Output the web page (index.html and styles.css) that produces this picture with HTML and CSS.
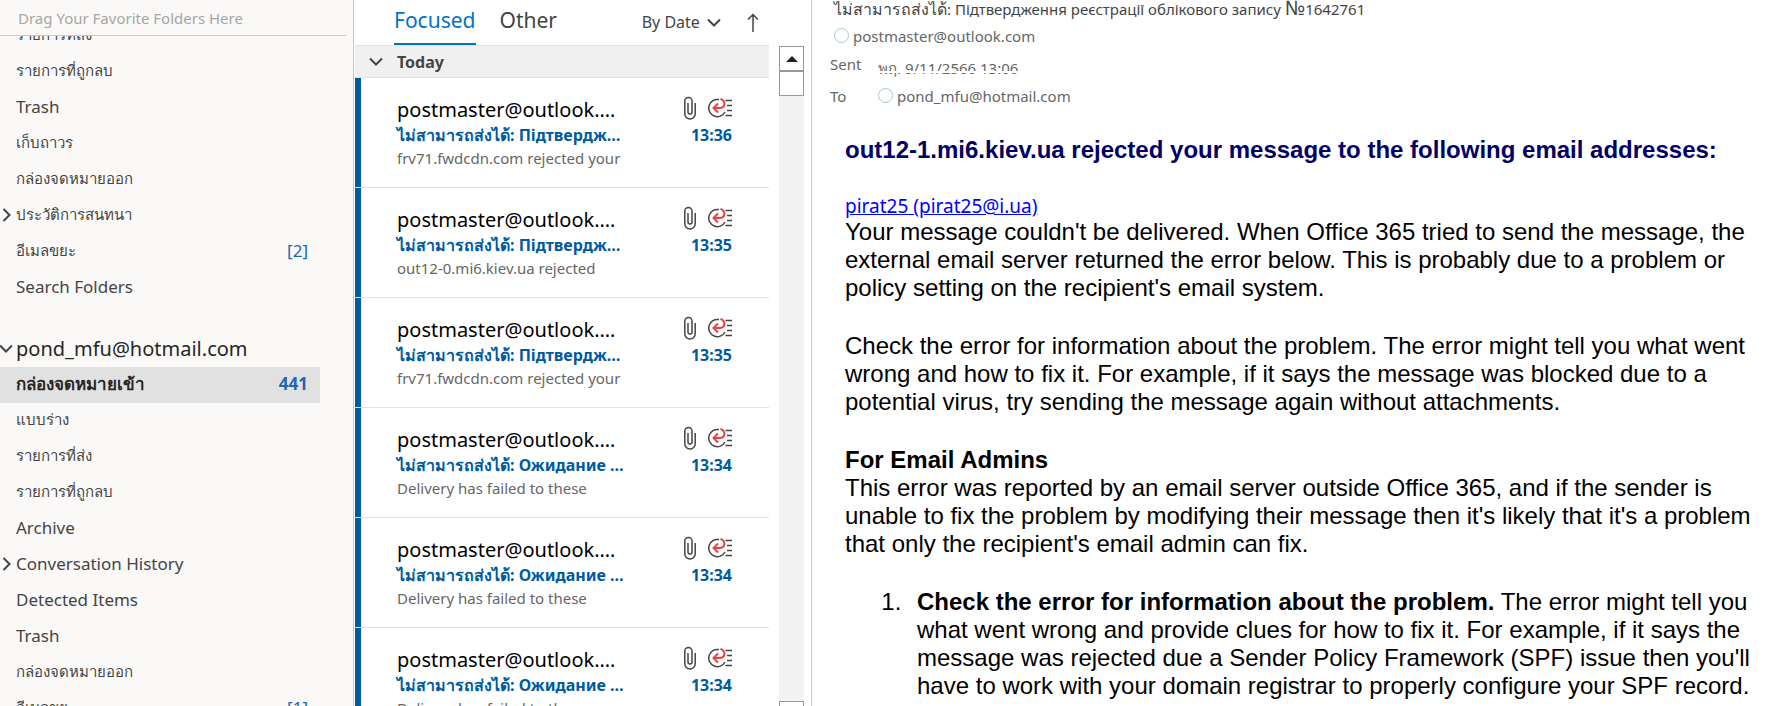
FILE: index.html
```html
<!DOCTYPE html>
<html lang="en">
<head>
    <meta charset="UTF-8">
    <meta name="viewport" content="width=device-width, initial-scale=1.0">
    <title>Inbox - pond_mfu@hotmail.com</title>
    <link rel="stylesheet" href="styles.css">
</head>
<body>
    <!-- Icons used by the message rows -->
    <svg class="sprite" aria-hidden="true">
        <symbol id="clip" viewBox="0 0 12 24">
            <path class="thin" d="M4 7v9a2 2 0 0 0 4 0V5a3.600 3.600 0 0 0-7.200 0v12.800a5.200 5.200 0 0 0 10.400 0V7"/>
        </symbol>
        <symbol id="bounce" viewBox="0 0 24 20">
            <path class="thin" d="M11 1.600A8.600 8.600 0 1 0 17 14"/>
            <path class="red" d="M12.500 .800c5.500 2.500 5 8.700-.500 9.200H6M10 5.500l-4.500 4.500 4.500 4.500"/>
            <path class="thin" d="M17.500 2.500H24M19 7.500h5M19 12.500h5M17.500 17.500H24"/>
        </symbol>
    </svg>

    <div class="app">
        <nav class="folders">
            <div class="favorites">Drag Your Favorite Folders Here</div>
            <div class="folder-scroll">
                <ul class="folder-list first">
                    <li><a href="#"><span class="th">รายการที่ส่ง</span></a></li>
                    <li><a href="#"><span class="th">รายการที่ถูกลบ</span></a></li>
                    <li><a href="#">Trash</a></li>
                    <li><a href="#"><span class="th">เก็บถาวร</span></a></li>
                    <li><a href="#"><span class="th">กล่องจดหมายออก</span></a></li>
                    <li><a href="#"><svg class="expand" viewBox="0 0 10 14"><path d="M1.500 1l6 6-6 6"/></svg><span class="th">ประวัติการสนทนา</span></a></li>
                    <li><a href="#"><span class="th">อีเมลขยะ</span><span class="count">[2]</span></a></li>
                    <li><a href="#">Search Folders</a></li>
                </ul>
                <h2 class="account"><svg class="collapse" viewBox="0 0 14 10"><path d="M1 1.500l6 6 6-6"/></svg>pond_mfu@hotmail.com</h2>
                <ul class="folder-list">
                    <li><a href="#" class="selected"><span class="th">กล่องจดหมายเข้า</span><span class="count">441</span></a></li>
                    <li><a href="#"><span class="th">แบบร่าง</span></a></li>
                    <li><a href="#"><span class="th">รายการที่ส่ง</span></a></li>
                    <li><a href="#"><span class="th">รายการที่ถูกลบ</span></a></li>
                    <li><a href="#">Archive</a></li>
                    <li><a href="#"><svg class="expand" viewBox="0 0 10 14"><path d="M1.500 1l6 6-6 6"/></svg>Conversation History</a></li>
                    <li><a href="#">Detected Items</a></li>
                    <li><a href="#">Trash</a></li>
                    <li><a href="#"><span class="th">กล่องจดหมายออก</span></a></li>
                    <li><a href="#"><span class="th">อีเมลขยะ</span><span class="count">[1]</span></a></li>
                </ul>
            </div>
        </nav>

        <section class="messages">
            <div class="toolbar">
                <button class="tab active">Focused</button>
                <button class="tab">Other</button>
                <button class="sort">By Date <svg class="chevron" viewBox="0 0 14 10"><path d="M1 1.500l6 6 6-6"/></svg></button>
                <button class="order" aria-label="Sort order"><svg viewBox="0 0 12 20"><path d="M6 19V1.500M1 6.500l5-5 5 5"/></svg></button>
            </div>
            <div class="list-area">
                <div class="list">
                    <h3 class="group"><svg class="chevron" viewBox="0 0 14 10"><path d="M1 1.500l6 6 6-6"/></svg>Today</h3>
                    <article class="message">
                        <div class="line"><span class="sender">postmaster@outlook.…</span><span class="icons"><svg class="clip"><use href="#clip"/></svg><svg class="bounce"><use href="#bounce"/></svg></span></div>
                        <div class="line"><span class="subject"><span class="th">ไม่สามารถส่งได้</span>: Підтвердж…</span><time>13:36</time></div>
                        <p class="preview">frv71.fwdcdn.com rejected your</p>
                    </article>
                    <article class="message">
                        <div class="line"><span class="sender">postmaster@outlook.…</span><span class="icons"><svg class="clip"><use href="#clip"/></svg><svg class="bounce"><use href="#bounce"/></svg></span></div>
                        <div class="line"><span class="subject"><span class="th">ไม่สามารถส่งได้</span>: Підтвердж…</span><time>13:35</time></div>
                        <p class="preview">out12-0.mi6.kiev.ua rejected</p>
                    </article>
                    <article class="message">
                        <div class="line"><span class="sender">postmaster@outlook.…</span><span class="icons"><svg class="clip"><use href="#clip"/></svg><svg class="bounce"><use href="#bounce"/></svg></span></div>
                        <div class="line"><span class="subject"><span class="th">ไม่สามารถส่งได้</span>: Підтвердж…</span><time>13:35</time></div>
                        <p class="preview">frv71.fwdcdn.com rejected your</p>
                    </article>
                    <article class="message">
                        <div class="line"><span class="sender">postmaster@outlook.…</span><span class="icons"><svg class="clip"><use href="#clip"/></svg><svg class="bounce"><use href="#bounce"/></svg></span></div>
                        <div class="line"><span class="subject"><span class="th">ไม่สามารถส่งได้</span>: Ожидание …</span><time>13:34</time></div>
                        <p class="preview">Delivery has failed to these</p>
                    </article>
                    <article class="message">
                        <div class="line"><span class="sender">postmaster@outlook.…</span><span class="icons"><svg class="clip"><use href="#clip"/></svg><svg class="bounce"><use href="#bounce"/></svg></span></div>
                        <div class="line"><span class="subject"><span class="th">ไม่สามารถส่งได้</span>: Ожидание …</span><time>13:34</time></div>
                        <p class="preview">Delivery has failed to these</p>
                    </article>
                    <article class="message">
                        <div class="line"><span class="sender">postmaster@outlook.…</span><span class="icons"><svg class="clip"><use href="#clip"/></svg><svg class="bounce"><use href="#bounce"/></svg></span></div>
                        <div class="line"><span class="subject"><span class="th">ไม่สามารถส่งได้</span>: Ожидание …</span><time>13:34</time></div>
                        <p class="preview">Delivery has failed to these</p>
                    </article>
                </div>
                <div class="scrollbar">
                    <button class="scroll-btn" aria-label="Scroll up"><svg viewBox="0 0 12 6"><path d="M0 6l6-6 6 6z"/></svg></button>
                    <div class="thumb"></div>
                    <button class="scroll-btn down" aria-label="Scroll down"></button>
                </div>
            </div>
        </section>

        <main class="reading">
            <header class="mail-header">
                <h1><span class="th">ไม่สามารถส่งได้</span>: Підтвердження реєстрації облікового запису <span class="numero">№</span>1642761</h1>
                <div class="from"><span class="presence"></span>postmaster@outlook.com</div>
                <dl>
                    <dt>Sent</dt>
                    <dd><span class="date">พฤ. 9/11/2566 13:06</span></dd>
                    <dt>To</dt>
                    <dd><span class="presence"></span>pond_mfu@hotmail.com</dd>
                </dl>
            </header>
            <div class="mail-body">
                <h2>out12-1.mi6.kiev.ua rejected your message to the following email addresses:</h2>
                <a class="address" href="mailto:pirat25@i.ua">pirat25 (pirat25@i.ua)</a>
                <p>Your message couldn't be delivered. When Office 365 tried to send the message, the external email server returned the error below. This is probably due to a problem or policy setting on the recipient's email system.</p>
                <p>Check the error for information about the problem. The error might tell you what went wrong and how to fix it. For example, if it says the message was blocked due to a potential virus, try sending the message again without attachments.</p>
                <h3>For Email Admins</h3>
                <p>This error was reported by an email server outside Office 365, and if the sender is unable to fix the problem by modifying their message then it's likely that it's a problem that only the recipient's email admin can fix.</p>
                <ol>
                    <li><b>Check the error for information about the problem.</b> The error might tell you what went wrong and provide clues for how to fix it. For example, if it says the message was rejected due a Sender Policy Framework (SPF) issue then you'll have to work with your domain registrar to properly configure your SPF record.</li>
                </ol>
            </div>
        </main>
    </div>
</body>
</html>
```
FILE: styles.css
```css
* {
    margin: 0;
    padding: 0;
    box-sizing: border-box;
}

body {
    font-family: 'Noto Sans', 'Open Sans', sans-serif;
    font-size: 16px;
    color: #444;
    background: #fff;
    overflow: hidden;
}

button {
    font: inherit;
    color: inherit;
    background: none;
    border: none;
    cursor: pointer;
}

ul {
    list-style: none;
}

svg path {
    fill: none;
    stroke: #444;
    stroke-width: 2;
}

svg .thin {
    stroke-width: 1.5;
}

svg .red {
    stroke: #ef4040;
}

.sprite {
    display: none;
}

.app {
    display: flex;
    height: 100vh;
}

/* Folder pane */
.folders {
    width: 354px;
    flex-shrink: 0;
    display: flex;
    flex-direction: column;
    background: #faf9f8;
    border-right: 1px solid #c8c8c8;
}

.favorites {
    flex-shrink: 0;
    height: 36px;
    margin-right: 7px;
    padding-left: 18px;
    line-height: 36px;
    font-size: 15px;
    color: #a6a6a6;
    border-bottom: 1px solid #c8c8c8;
}

.folder-scroll {
    flex: 1;
    min-height: 0;
    overflow: hidden;
}

.folder-list.first {
    margin-top: -18px;
}

.folder-list a {
    display: flex;
    align-items: center;
    position: relative;
    width: 320px;
    height: 36px;
    padding: 0 12px 3px 16px;
    font-size: 17px;
    color: #444;
    text-decoration: none;
}

.folder-list .th {
    font-size: 15px;
}

.folder-list a.selected {
    background: #e1e1e1;
    color: #262626;
    font-weight: bold;
}

.folder-list .selected .th {
    font-size: 17px;
}

.count {
    margin-left: auto;
    color: #2266b2;
}

.expand {
    position: absolute;
    left: 2px;
    width: 10px;
    height: 14px;
}

.account {
    position: relative;
    margin-top: 25px;
    padding-left: 16px;
    line-height: 36px;
    font-size: 20px;
    font-weight: normal;
    color: #262626;
}

.collapse {
    position: absolute;
    left: -1px;
    top: 13px;
    width: 14px;
    height: 10px;
}

/* Message list */
.messages {
    width: 456px;
    flex-shrink: 0;
    display: flex;
    flex-direction: column;
    margin-left: 1px;
}

.toolbar {
    display: flex;
    flex-shrink: 0;
    height: 45px;
    padding-left: 39px;
}

.tab {
    height: 45px;
    padding: 0 1px 4px 0;
    font-size: 21px;
    margin-right: 23px;
    border-bottom: 2px solid transparent;
}

.tab.active {
    color: #0072c6;
    border-bottom-color: #0072c6;
}

.sort {
    margin-left: auto;
    padding-bottom: 2px;
}

.chevron {
    width: 14px;
    height: 10px;
}

.order {
    margin: 0 52px 0 26px;
}

.sort .chevron {
    margin-left: 3px;
}

.order svg {
    width: 12px;
    height: 20px;
    display: block;
}

.order path {
    stroke-width: 1.5;
}

.list-area {
    display: flex;
    flex: 1;
    min-height: 0;
}

.list {
    flex: 1;
    overflow: hidden;
}

.group {
    display: flex;
    align-items: center;
    gap: 14px;
    height: 33px;
    padding-left: 14px;
    font-size: 16px;
    background: #f0f0f0;
    border-top: 1px solid #e1e1e1;
    border-bottom: 1px solid #e1e1e1;
}

.message {
    height: 110px;
    padding: 17px 37px 0 42px;
    border-bottom: 1px solid #e1e1e1;
    background: linear-gradient(#005a9e, #005a9e) no-repeat 0 0 / 6px 100%;
}

.line {
    display: flex;
    justify-content: space-between;
    align-items: center;
}

.sender {
    font-size: 20px;
    line-height: 30px;
    color: #000;
}

.icons {
    display: flex;
    align-items: center;
    gap: 12px;
    padding-bottom: 4px;
}

.clip {
    width: 12px;
    height: 24px;
}

.bounce {
    width: 24px;
    height: 20px;
}

.subject, .message time {
    font-size: 16px;
    line-height: 20px;
    font-weight: bold;
    color: #005a9e;
    white-space: nowrap;
}

.preview {
    font-size: 15px;
    line-height: 27px;
    color: #666;
}

.scrollbar {
    display: flex;
    flex-direction: column;
    width: 25px;
    margin: 1px 7px 0 10px;
    background: #f2f2f2;
}

.scroll-btn, .thumb {
    flex-shrink: 0;
    height: 25px;
    background: #fff;
    border: 1px solid #999;
}

.scroll-btn svg {
    display: block;
    width: 12px;
    height: 6px;
    margin: auto;
}

.scroll-btn path {
    fill: #222;
    stroke: none;
}

.scroll-btn.down {
    margin: auto 0 -20px;
}

/* Reading pane */
.reading {
    flex: 1;
    min-width: 0;
    padding: 0 30px 0 18px;
    border-left: 1px solid #c8c8c8;
    overflow: hidden;
}

.mail-header {
    height: 112px;
    font-size: 15px;
    color: #666;
}

.mail-header h1 {
    height: 20px;
    padding-left: 4px;
    font-size: 15px;
    line-height: 16px;
    font-weight: normal;
    color: #444;
    white-space: nowrap;
}

.mail-header h1 .th {
    font-size: 16px;
}

.numero {
    font-size: 20px;
    line-height: 16px;
}

.from {
    padding-left: 4px;
    line-height: 32px;
}

.presence {
    display: inline-block;
    width: 15px;
    height: 15px;
    margin-right: 4px;
    border: 1px solid #a9c7d4;
    border-radius: 50%;
    vertical-align: -1px;
}

.mail-header dl {
    display: grid;
    grid-template-columns: 48px 1fr;
    grid-auto-rows: 32px;
    line-height: 24px;
}

/* The date is only partly painted: its upper edge is cut and a thin band is missing */
.date {
    display: block;
    position: relative;
    height: 18px;
    margin-top: 12px;
    line-height: 8px;
    overflow: hidden;
}

.date::after {
    content: '';
    position: absolute;
    left: 0;
    right: 0;
    top: 7px;
    height: 2px;
    background: #fff;
}

.mail-body {
    padding: 24px 0 0 15px;
    font-family: 'Liberation Sans', Arial, sans-serif;
    font-size: 24px;
    line-height: 28px;
    color: #000;
}

.mail-body h2 {
    margin-bottom: 30px;
    font-size: 24px;
    color: #000066;
}

.mail-body h3 {
    font-size: 24px;
}

.mail-body p {
    margin-bottom: 30px;
}

.address {
    display: block;
    font-family: 'Noto Sans', sans-serif;
    font-size: 19px;
    line-height: 24px;
    color: #0000ff;
}

.mail-body ol {
    padding-left: 63px;
}

.mail-body li {
    padding-left: 9px;
}
```
